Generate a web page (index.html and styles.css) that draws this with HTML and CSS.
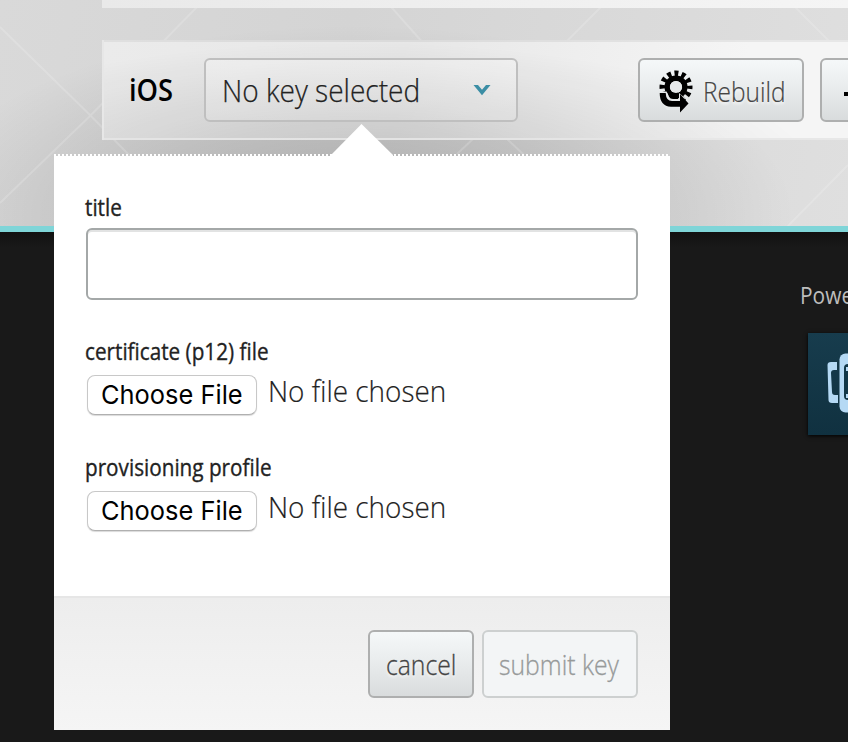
FILE: index.html
```
<!DOCTYPE html>
<html lang="en">
<head>
<meta charset="utf-8">
<title>Signing keys</title>
<link rel="stylesheet" href="styles.css">
</head>
<body>
<main class="stage">
  <svg class="pattern" width="848" height="226" viewBox="0 0 848 226" aria-hidden="true">
    <path d="M0 27 90 115 132 158M0 203 90 116 200 4M385 0 424 44M566 42 608 0M788 0 832 44M457 154 474 138M506 138 524 155M787 227 848 165"/>
  </svg>
  <div class="panel previous"></div>
  <section class="panel platform">
    <h2 class="name"><span class="fit">iOS</span></h2>
    <div class="select"><span class="fit">No key selected</span>
      <svg class="chevron" width="18" height="12" viewBox="0 0 18 12"><path d="M.5 1H5L9 5.800 13 1H17.500L9 11.200Z"/></svg>
    </div>
    <button class="btn rebuild">
      <svg width="34" height="44" viewBox="0 0 34 44">
        <g transform="translate(17 17)" fill="none" stroke="#000">
          <circle r="8.8" stroke-width="5.4"/>
          <circle r="13.7" stroke-width="5.6" stroke-dasharray="3.9 3.273" stroke-dashoffset="1.95"/>
        </g>
        <path class="knock" d="M0 21.500H7.500L12 28.500H20V23L26 28 20 40H8L0 30Z"/>
        <path d="M.7 23H6.700Q7 31 13 31H21V24L29.500 33.500 21 42.500V36.800H12Q.7 36 .7 23Z"/>
        <path d="M8.500 21Q9 28.800 14 29H19V22Z"/>
        <circle class="knock" cx="17" cy="17" r="6.100"/>
      </svg>
      <span class="fit">Rebuild</span>
    </button>
    <button class="btn download"><i></i></button>
  </section>
</main>
<footer class="footer">
  <p><span class="fit">Powered by</span></p>
  <div class="logo">
    <svg width="104" height="102" viewBox="0 0 104 102"><path d="M29 29H23Q19.500 29 19.500 32L20.500 67Q20.500 70 24 70H30V62H27Q24 62 24 59L23 40Q23 37 26 37H29Z"/><rect x="31.500" y="20.500" width="41" height="59" rx="6"/><rect class="screen" x="36" y="31" width="32" height="36" rx="4"/><path d="M38 34H44V38H38ZM38 61H44V65H38Z"/></svg>
  </div>
</footer>
<form class="popover">
  <svg class="pointer" width="62" height="32" viewBox="0 0 62 32"><path d="M0 31 30.500 0 62 31V32H0Z"/></svg>
  <div class="fields">
    <label class="label l1"><span class="fit">title</span></label>
    <input class="title" type="text" aria-label="title">
    <label class="label l2"><span class="fit">certificate (p12) file</span></label>
    <div class="file"><button type="button"><span class="fit">Choose File</span></button><span class="fit status">No file chosen</span></div>
    <label class="label l3"><span class="fit">provisioning profile</span></label>
    <div class="file"><button type="button"><span class="fit">Choose File</span></button><span class="fit status">No file chosen</span></div>
  </div>
  <div class="actions">
    <button type="button" class="btn cancel"><span class="fit">cancel</span></button>
    <button type="button" class="btn submit" disabled><span class="fit">submit key</span></button>
  </div>
</form>
</body>
</html>
```
FILE: styles.css
```
* { box-sizing: border-box; }
body { margin: 0; width: 848px; height: 742px; position: relative; overflow: hidden; background: #191919; font-family: "Open Sans", "Noto Sans", sans-serif; color: #222; }
button { font-family: inherit; margin: 0; }
.fit { display: inline-block; white-space: nowrap; transform-origin: 0 50%; transform: scaleX(.91); }
.stage { height: 232px; position: relative; overflow: hidden; border-bottom: 6px solid #7fd5d8; background: radial-gradient(ellipse 440px 190px at 355px 215px, rgba(0,0,0,.2), rgba(0,0,0,.11) 50%, transparent), linear-gradient(100deg, #d9d9d9, #d4d4d4 40%, #dfdfdf); }
.pattern { position: absolute; left: 0; top: 0; fill: none; stroke: rgba(255,255,255,.17); stroke-width: 2; }
.panel { position: relative; margin-left: 102px; width: 746px; overflow: hidden; }
.previous { height: 8px; background: linear-gradient(90deg, #e9e9e9, #f5f5f5); }
.platform { margin-top: 32px; height: 100px; border: 2px solid rgba(225,225,225,.7); border-right: 0; display: flex; align-items: flex-start; padding-top: 16px; background: radial-gradient(ellipse 460px 130px at 250px 130px, rgba(0,0,0,.17), transparent), linear-gradient(100deg, #ebebeb, #e7e7e7 40%, #f5f5f5 85%); }
.name { flex: none; margin: 0; width: 75px; margin-left: 25px; font-size: 30px; line-height: 64px; font-weight: 650; color: #000; }
.select { flex: none; width: 314px; height: 64px; border: 2px solid #bfbfbf; border-radius: 6px; display: flex; align-items: center; justify-content: space-between; padding: 0 25px 0 16px; font-weight: 330; font-size: 31px; background: linear-gradient(rgba(255,255,255,.3), rgba(255,255,255,.15)); }
.select .fit { transform: translateY(-.5px) scaleX(.905); -webkit-text-stroke: .25px; }
.chevron { fill: #3b8ea5; flex: none; }
.btn { flex: none; border: 2px solid #aeafaf; border-radius: 6px; background: linear-gradient(#f5f8f9, #e8ebec 50%, #d9dcdd); color: #444; font-weight: 320; font-size: 27px; text-shadow: 0 2px 3px rgba(255,255,255,.9); padding: 0; display: flex; align-items: center; }
.rebuild { width: 166px; height: 64px; margin-left: 120px; padding-left: 19px; gap: 10px; }
.rebuild svg { flex: none; margin-top: 4px; }
.rebuild .fit { transform: translateY(1px) scaleX(.905); -webkit-text-stroke: .2px; }
.rebuild .knock { fill: #e6e9ea; }
.download { width: 166px; height: 64px; margin-left: 16px; padding-left: 22px; }
.download i { width: 22px; height: 4px; background: #000; margin-top: 8px; }
.footer { height: 510px; overflow: hidden; background: linear-gradient(#111, #191919 16px); display: flex; flex-direction: column; align-items: flex-start; color: #bdbdbd; }
.footer p { margin: 46px 0 0 800px; font-size: 23px; line-height: 34px; white-space: nowrap; }
.logo { flex: none; margin: 21px 0 0 808px; width: 104px; height: 102px; background: linear-gradient(#173c4d, #103140); box-shadow: 0 1px 4px #000; }
.logo svg { display: block; fill: #b5d9f4; }
.logo .screen { fill: #123747; }
.popover { position: absolute; left: 54px; top: 154px; width: 616px; height: 576px; background: #fff; background-clip: padding-box; border-top: 2px dotted transparent; display: flex; flex-direction: column; }
.popover::before { content: ""; position: absolute; left: 0; right: 0; top: -2px; height: 2px; background: repeating-linear-gradient(90deg, #fff 0 2px, transparent 2px 4px); }
.pointer { position: absolute; left: 277px; top: -32px; fill: #fff; }
.fields { height: 440px; padding: 35px 32px 0 31px; display: flex; flex-direction: column; align-items: flex-start; }
.label { height: 32px; line-height: 32px; font-size: 23px; font-weight: 450; }
.label .fit { transform: scaleX(.9); -webkit-text-stroke: .35px; }
.title { margin: 5px 0 0 1px; width: 552px; height: 72px; border: 2px solid #a4a8a8; border-radius: 6px; background: #fff; box-shadow: inset 0 2px 0 #e2e3e3; padding: 0 14px; font-size: 28px; }
.l2 { margin-top: 35px; }
.l3 { margin-top: 36px; }
.file { height: 44px; margin: 4px 0 0 2px; display: flex; align-items: flex-start; }
.file button { margin-top: 4px; width: 170px; height: 40px; padding: 0 0 0 13px; text-align: left; border: 1px solid #c8c8c8; border-bottom-color: #b0b0b0; border-radius: 8px; background: #fff; box-shadow: 0 1px 1px rgba(0,0,0,.15); color: #000; font: 26px/36px Inter, sans-serif; }
.file button .fit { transform: scaleX(.978); }
.status { margin-left: 11px; font-size: 30px; line-height: 40px; font-weight: 320; }
.file .status { transform: scaleX(.93); -webkit-text-stroke: .2px; }
.actions { height: 134px; border-top: 2px solid #e6e6e6; background: linear-gradient(#ededed, #f5f5f5); display: flex; justify-content: flex-end; gap: 8px; padding: 32px 32px 0 0; }
.actions .fit { transform: scaleX(.916); -webkit-text-stroke: .3px; }
.cancel { width: 106px; height: 68px; padding-left: 16px; }
.submit { width: 156px; height: 68px; padding-left: 15px; border-color: #cdd0d0; background: #f3f5f6; color: #979a9a; text-shadow: none; }
```
